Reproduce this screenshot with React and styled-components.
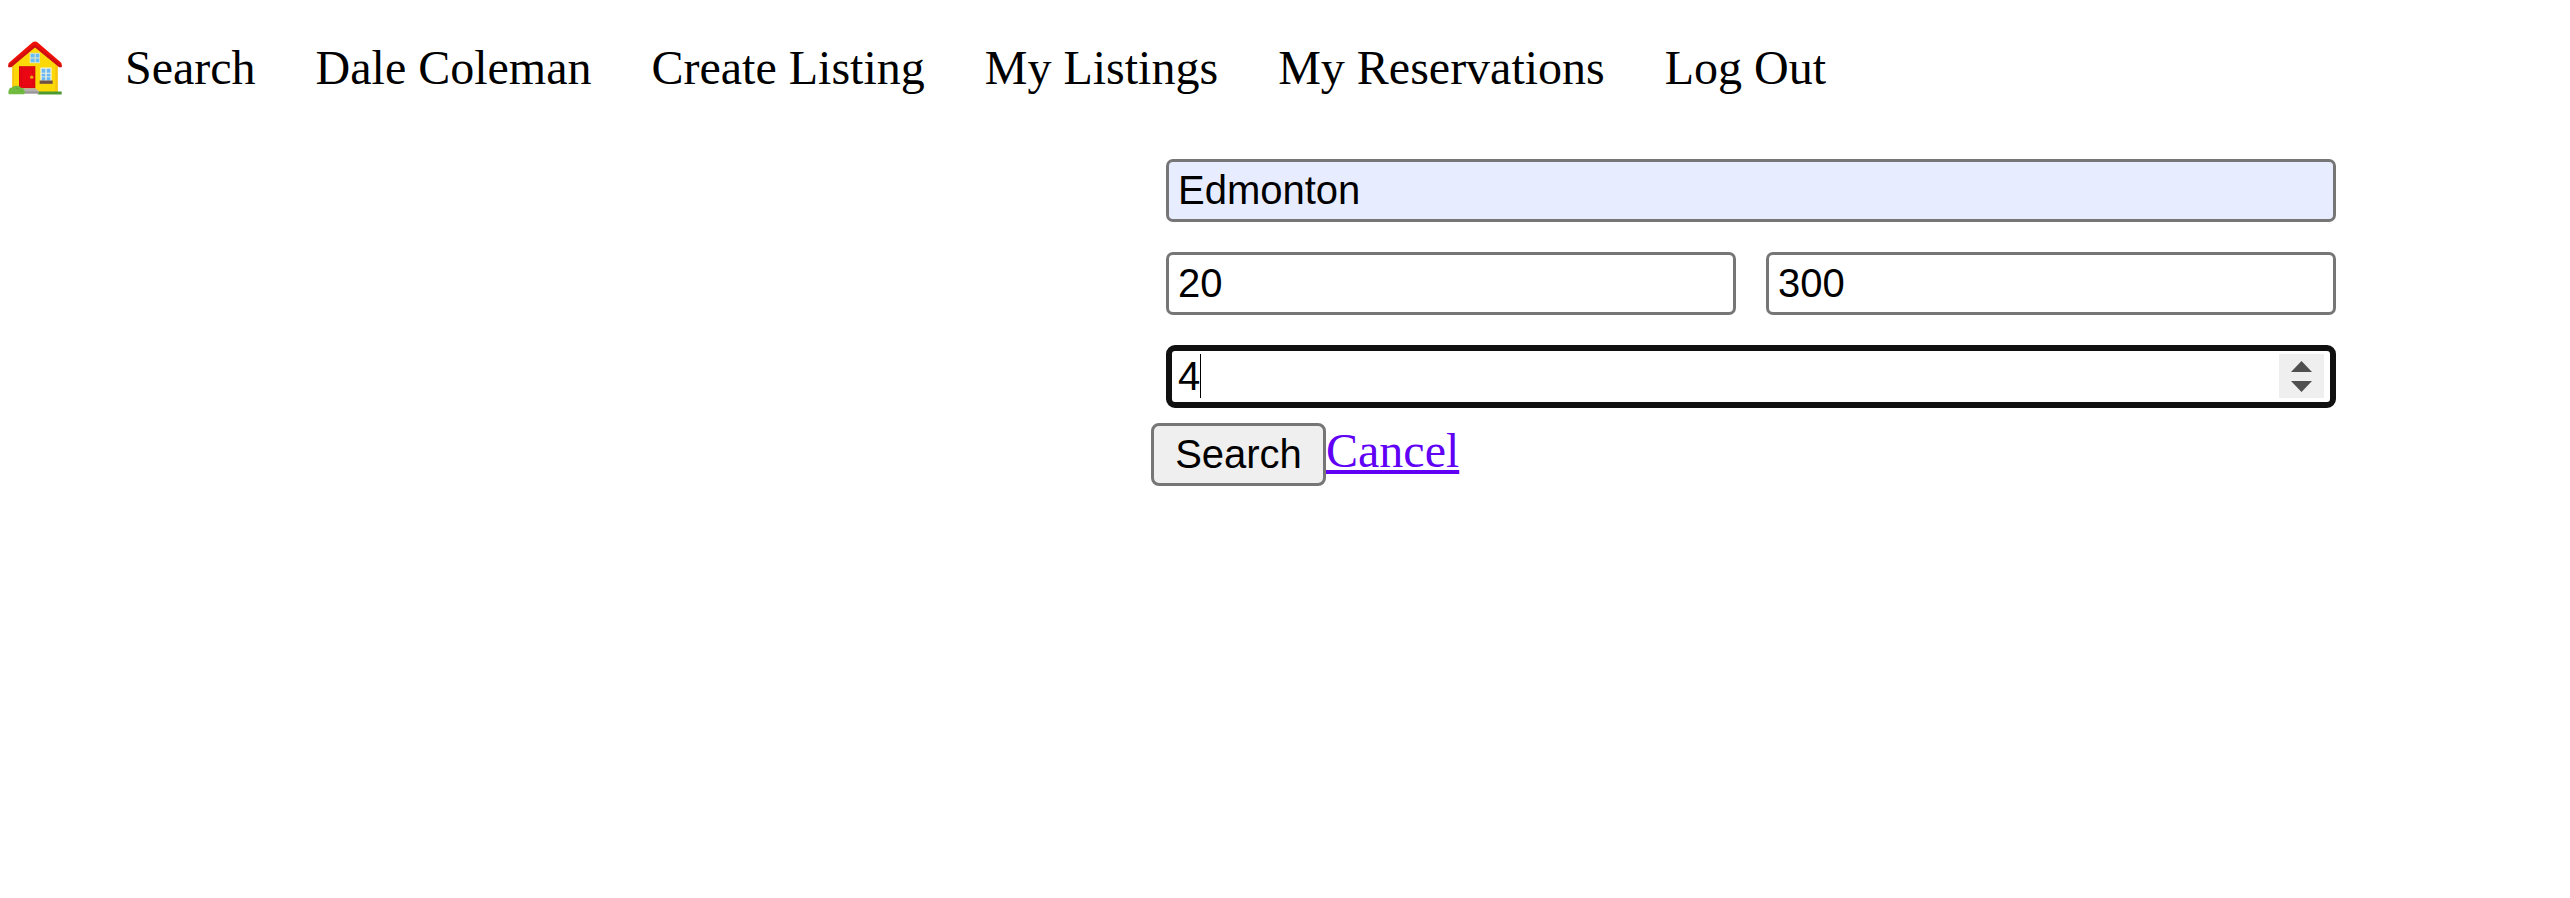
import React from "react";
import styled, { createGlobalStyle, css } from "styled-components";

const GlobalStyle = createGlobalStyle`
  body {
    margin: 0;
    background: #fff;
    color: #000;
    font: 48px/55px "Liberation Serif", "Times New Roman", serif;
  }
`;

const Nav = styled.nav`
  display: flex;
  align-items: center;
  gap: 60px;
  height: 55px;
  padding: 40px 0 0 5px;
`;

const HomeLink = styled.a`
  display: flex;
  width: 60px;
`;

const NavLink = styled.a`
  color: #000;
  text-decoration: none;
  white-space: nowrap;
`;

const Form = styled.form`
  width: 1200px;
  margin: 49px 0 0 1151px;
`;

const Row = styled.div`
  display: flex;
  gap: 30px;
  padding: 15px;
`;

const Field = styled.div`
  position: relative;
  flex: 1;
  display: flex;
`;

const Input = styled.input`
  box-sizing: border-box;
  width: 100%;
  height: 63px;
  margin: 0;
  padding: 6px 9px;
  border: 3px solid #767676;
  border-radius: 7px;
  outline: none;
  background: ${(p) => (p.$filled ? "#e8ecff" : "#fff")};
  color: #000;
  font: 40px/45px "Liberation Sans", Arial, sans-serif;
  ${(p) =>
    p.$focused &&
    css`
      padding: 3px 6px;
      border: 6px solid #101010;
      border-radius: 9px;
    `}
`;

const Caret = styled.span`
  position: absolute;
  left: 34px;
  top: 9px;
  width: 1px;
  height: 44px;
  background: #000;
`;

const Spinner = styled.svg`
  position: absolute;
  right: 12px;
  top: 9px;
  width: 45px;
  height: 44px;
`;

const Actions = styled.div`
  display: flex;
  align-items: flex-start;
`;

const SubmitButton = styled.button`
  box-sizing: border-box;
  width: 175px;
  height: 63px;
  margin: 0;
  padding: 0;
  border: 3px solid #767676;
  border-radius: 8px;
  background: #efefef;
  color: #000;
  font: 40px/45px "Liberation Sans", Arial, sans-serif;
`;

const CancelLink = styled.a`
  color: #6000f5;
  text-decoration: underline;
  text-decoration-thickness: 4px;
  text-underline-offset: 3px;
  text-decoration-skip-ink: none;
`;

const House = () => (
  <svg width="60" height="60" viewBox="15 22.5 180 180" aria-label="Home">
    <path d="M37 98 105 42 173 98V187H37Z" fill="#fcd808" />
    <path d="M37 98V187H42V93ZM173 98V187H166V93Z" fill="#f7c510" />
    <path d="M37 98 105 44 173 98V104L105 50 37 104Z" fill="#eeb51a" />
    <path d="M105 33Q101 33 97 36L27 97Q25 99 25 103V109L34 108 105 50 176 108 185 109V102Q185 98 182 95L113 36Q109 33 105 33Z" fill="#ee1108" />
    <path d="M25 104 105 42 185 104V110H178L105 50 34 110H25Z" fill="#cf0d12" />
    <rect x="89" y="67" width="31" height="31" fill="#e6e9c0" />
    <path d="M92 70h12v11H92zM107 70h11v11h-11zM92 84h12v11H92zM107 84h11v11h-11z" fill="#66bdf8" />
    <rect x="57" y="107" width="49" height="66" fill="#cf0810" />
    <rect x="60" y="110" width="43" height="61" fill="#ea0612" />
    <path d="M65 115h33v50H65z" fill="none" stroke="#d00610" strokeWidth="1.5" />
    <circle cx="95" cy="140" r="5" fill="#e9ac10" />
    <rect x="121" y="111" width="34" height="42" fill="#f1f2dc" />
    <path d="M125 115h11v12h-11zM140 115h11v12h-11zM125 130h11v8h-11zM140 130h11v8h-11zM125 140h11v10h-11zM140 140h11v10h-11z" fill="#67b8f5" />
    <path d="M119 150h39v10h-39z" fill="#705044" />
    <path d="M113 183h72v9h-72z" fill="#4b9a30" />
    <path d="M60 173h46l11 10v6H60z" fill="#b4b0b0" />
    <path d="M73 183h44v6H73z" fill="#989494" />
    <path d="M26 191Q24 183 27 177Q28 171 36 171Q41 164 51 166Q59 165 62 172Q70 171 73 179Q77 185 73 191Z" fill="#70bb40" />
    <path d="M48 173Q56 171 57 179M60 182Q67 179 68 185" fill="none" stroke="#5ba038" strokeWidth="2" />
  </svg>
);

const links = ["Search", "Dale Coleman", "Create Listing", "My Listings", "My Reservations", "Log Out"];

export default function App() {
  return (
    <>
      <GlobalStyle />
      <Nav>
        <HomeLink><House /></HomeLink>
        {links.map((label) => <NavLink key={label}>{label}</NavLink>)}
      </Nav>
      <Form>
        <Row>
          <Field><Input $filled defaultValue="Edmonton" /></Field>
        </Row>
        <Row>
          <Field><Input defaultValue="20" /></Field>
          <Field><Input defaultValue="300" /></Field>
        </Row>
        <Row>
          <Field>
            <Input $focused defaultValue="4" />
            <Caret />
            <Spinner viewBox="0 0 45 44">
              <rect width="45" height="44" fill="#efefef" />
              <path d="M12 18 22.5 7 33 18ZM12 27H33L22.5 38Z" fill="#505050" />
            </Spinner>
          </Field>
        </Row>
        <Actions>
          <SubmitButton type="button">Search</SubmitButton>
          <CancelLink>Cancel</CancelLink>
        </Actions>
      </Form>
    </>
  );
}
